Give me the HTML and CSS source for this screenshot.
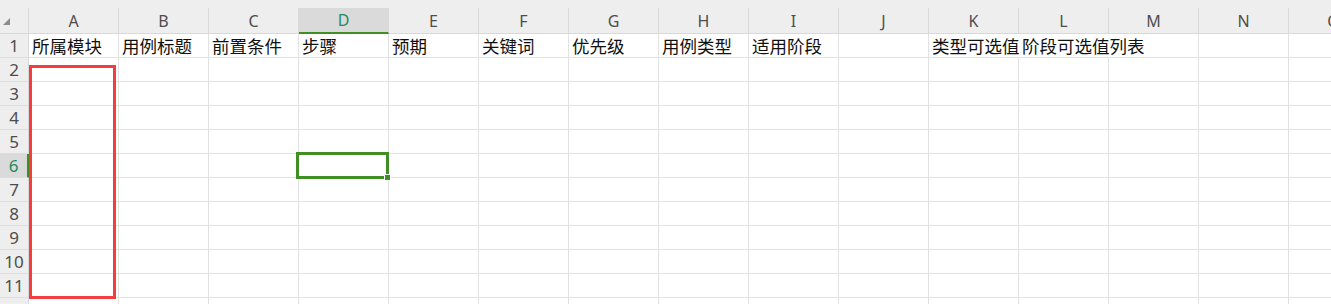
FILE: index.html
```html
<!DOCTYPE html>
<html lang="zh-CN">
<head>
  <meta charset="UTF-8">
  <title>用例模板</title>
  <link rel="stylesheet" href="styles.css">
</head>
<body>

<div class="topbar"></div>

<table class="sheet">
  <colgroup>
    <col class="rh">
    <col class="c"><col class="c"><col class="c"><col class="c"><col class="c">
    <col class="c"><col class="c"><col class="c"><col class="c"><col class="c">
    <col class="c"><col class="c"><col class="c"><col class="c"><col class="c">
  </colgroup>
  <thead>
    <tr>
      <th class="corner"><span class="tri"></span></th>
      <th>A</th><th>B</th><th>C</th><th class="cur">D</th><th>E</th>
      <th>F</th><th>G</th><th>H</th><th>I</th><th>J</th>
      <th>K</th><th>L</th><th>M</th><th>N</th><th>O</th>
    </tr>
  </thead>
  <tbody>
    <tr>
      <th>1</th>
      <td>所属模块</td><td>用例标题</td><td>前置条件</td><td>步骤</td><td>预期</td>
      <td>关键词</td><td>优先级</td><td>用例类型</td><td>适用阶段</td><td></td>
      <td class="spill">类型可选值</td><td class="spill">阶段可选值列表</td><td></td><td></td><td></td>
    </tr>
    <tr><th>2</th><td></td><td></td><td></td><td></td><td></td><td></td><td></td><td></td><td></td><td></td><td></td><td></td><td></td><td></td><td></td></tr>
    <tr><th>3</th><td></td><td></td><td></td><td></td><td></td><td></td><td></td><td></td><td></td><td></td><td></td><td></td><td></td><td></td><td></td></tr>
    <tr><th>4</th><td></td><td></td><td></td><td></td><td></td><td></td><td></td><td></td><td></td><td></td><td></td><td></td><td></td><td></td><td></td></tr>
    <tr><th>5</th><td></td><td></td><td></td><td></td><td></td><td></td><td></td><td></td><td></td><td></td><td></td><td></td><td></td><td></td><td></td></tr>
    <tr><th class="cur">6</th><td></td><td></td><td></td><td></td><td></td><td></td><td></td><td></td><td></td><td></td><td></td><td></td><td></td><td></td><td></td></tr>
    <tr><th>7</th><td></td><td></td><td></td><td></td><td></td><td></td><td></td><td></td><td></td><td></td><td></td><td></td><td></td><td></td><td></td></tr>
    <tr><th>8</th><td></td><td></td><td></td><td></td><td></td><td></td><td></td><td></td><td></td><td></td><td></td><td></td><td></td><td></td><td></td></tr>
    <tr><th>9</th><td></td><td></td><td></td><td></td><td></td><td></td><td></td><td></td><td></td><td></td><td></td><td></td><td></td><td></td><td></td></tr>
    <tr><th>10</th><td></td><td></td><td></td><td></td><td></td><td></td><td></td><td></td><td></td><td></td><td></td><td></td><td></td><td></td><td></td></tr>
    <tr><th>11</th><td></td><td></td><td></td><td></td><td></td><td></td><td></td><td></td><td></td><td></td><td></td><td></td><td></td><td></td><td></td></tr>
    <tr><th>12</th><td></td><td></td><td></td><td></td><td></td><td></td><td></td><td></td><td></td><td></td><td></td><td></td><td></td><td></td><td></td></tr>
  </tbody>
</table>

<!-- annotation box over column A -->
<div class="mark-red"></div>

<!-- active cell D6 -->
<div class="selection"><span class="handle"></span></div>

</body>
</html>
```

FILE: styles.css
```css
body {
  margin: 0;
  background: #fff;
  overflow: hidden;
  font-family: "Noto Sans CJK SC", sans-serif;
}

.topbar {
  height: 8px;
  background: #eeeeee;
}

.sheet {
  border-collapse: separate;
  border-spacing: 0;
  table-layout: fixed;
  width: 1379px;
}

.sheet col.rh { width: 29px; }
.sheet col.c { width: 90px; }

.sheet th,
.sheet td {
  box-sizing: border-box;
  padding: 0;
  font-weight: normal;
}

.sheet thead th {
  height: 26px;
  background: #eeeeee;
  border-right: 1px solid #d9d9d9;
  border-bottom: 1px solid #d9d9d9;
  font-family: "Noto Sans", "Liberation Sans", sans-serif;
  font-size: 16px;
  color: #4d4d4d;
  text-align: center;
  line-height: 24px;
}

.sheet thead th.cur {
  background: #dadada;
  color: #1d8a5e;
  border-bottom: 2px solid #3f8f22;
}

.sheet thead th.corner {
  text-align: left;
  vertical-align: top;
}

.tri {
  display: block;
  width: 0;
  height: 0;
  margin: 10px 0 0 3px;
  border-left: 7px solid transparent;
  border-bottom: 7px solid #8c8c8c;
}

.sheet tbody th {
  height: 24px;
  background: #eeeeee;
  border-right: 1px solid #d9d9d9;
  border-bottom: 1px solid #dedede;
  font-family: "Noto Sans", "Liberation Sans", sans-serif;
  font-size: 17px;
  color: #4d4d4d;
  text-align: center;
  line-height: 22px;
  overflow: hidden;
  white-space: nowrap;
}

.sheet tbody th.cur {
  background: #dadada;
  color: #1d8a5e;
  border-right: 2px solid #3f8f22;
}

.sheet td {
  height: 24px;
  padding: 0 3px;
  border-right: 1px solid #e2e2e2;
  border-bottom: 1px solid #e2e2e2;
  font-size: 17.5px;
  color: #111;
  line-height: 22px;
  white-space: nowrap;
  overflow: visible;
}

.sheet td.spill {
  border-right-color: transparent;
}

.mark-red {
  position: absolute;
  left: 29px;
  top: 65px;
  width: 87px;
  height: 234px;
  box-sizing: border-box;
  border: 3px solid #f43d3d;
}

.selection {
  position: absolute;
  left: 296px;
  top: 152px;
  width: 93px;
  height: 27px;
  box-sizing: border-box;
  border: 3px solid #3f8f22;
}

.handle {
  position: absolute;
  left: 85px;
  top: 19px;
  width: 7px;
  height: 7px;
  box-sizing: border-box;
  border: 1px solid #fff;
  background: #3f8f22;
}
```
